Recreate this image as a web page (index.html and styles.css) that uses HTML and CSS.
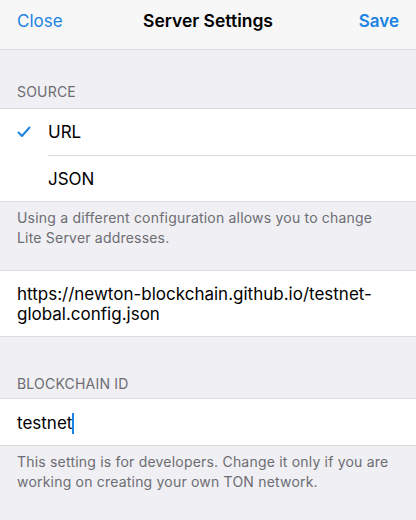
FILE: index.html
```html
<!DOCTYPE html>
<html lang="en">
  <head>
    <meta charset="UTF-8" />
    <meta name="viewport" content="width=device-width, initial-scale=1.0" />
    <title>Server Settings</title>
    <link rel="stylesheet" href="styles.css">
  </head>
  <body>
    <div class="navbar">
      <span class="nav_btn">Close</span>
      <span class="nav_title">Server Settings</span>
      <span class="nav_btn nav_save">Save</span>
    </div>

    <div class="section_header">SOURCE</div>
    <div class="group">
      <div class="row">
        <span class="check">
          <svg width="14" height="12" viewBox="0 0 14 12">
            <path d="M1.5 6.5 L5 10 L12.5 1.5" fill="none" stroke="#1c83e3" stroke-width="2" stroke-linecap="round" stroke-linejoin="round" />
          </svg>
        </span>
        <span class="row_text">URL</span>
      </div>
      <div class="row">
        <span class="check"></span>
        <span class="row_text">JSON</span>
      </div>
    </div>
    <div class="section_footer">Using a different configuration allows you to change Lite Server addresses.</div>

    <div class="group group_url">
      <div class="url_text">https://newton-blockchain.github.io/testnet-global.config.json</div>
    </div>

    <div class="section_header section_header_top">BLOCKCHAIN ID</div>
    <div class="group">
      <div class="input_row">testnet<span class="caret"></span></div>
    </div>
    <div class="section_footer">This setting is for developers. Change it only if you are working on creating your own TON network.</div>
  </body>
</html>
```

FILE: styles.css
```css
body {
  margin: 0;
  background-color: #efeff4;
  font-family: Inter, "Liberation Sans", sans-serif;
  color: #000;
}
.navbar {
  height: 41px;
  background-color: #f7f7f7;
  border-bottom: 1px solid #dcdcdf;
  display: grid;
  grid-template-columns: 1fr auto 1fr;
  align-items: center;
  padding: 0 17px 8px;
}
.nav_btn {
  font-size: 17px;
  color: #1c83e3;
}
.nav_save {
  font-weight: 600;
  justify-self: end;
}
.nav_title {
  font-size: 17.5px;
  font-weight: 600;
}
.section_header {
  font-size: 14px;
  letter-spacing: 0.2px;
  color: #6d6d72;
  padding: 33px 17px 8px;
}
.section_header_top {
  padding: 38px 17px 6px;
}
.group {
  background-color: #fff;
  border-top: 1px solid #dcdcdf;
  border-bottom: 1px solid #dcdcdf;
}
.row {
  display: flex;
  align-items: center;
  height: 46px;
}
.row + .row .row_text {
  border-top: 1px solid #dcdcdf;
}
.check {
  width: 31px;
  padding-left: 17px;
  display: flex;
  align-items: center;
}
.row_text {
  flex: 1;
  font-size: 17px;
  height: 100%;
  display: flex;
  align-items: center;
}
.section_footer {
  font-size: 14px;
  letter-spacing: 0.2px;
  color: #6d6d72;
  line-height: 20px;
  padding: 6px 17px 0;
}
.group_url {
  margin-top: 22px;
  padding: 13px 17px 12px;
  font-size: 17px;
  line-height: 20px;
}
.input_row {
  height: 46px;
  display: flex;
  align-items: center;
  padding: 2px 17px 0;
  box-sizing: border-box;
  font-size: 17px;
}
.caret {
  display: inline-block;
  width: 2px;
  height: 21px;
  background-color: #1c83e3;
}
```
